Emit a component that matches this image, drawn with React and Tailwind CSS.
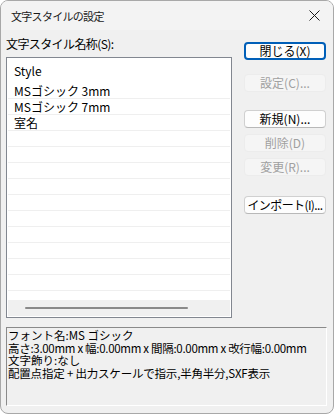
import React from "react";

const FONT = { fontFamily: '"Noto Sans CJK JP", "Noto Sans", sans-serif' };

function DlgButton({ label, primary = false, disabled = false, className = "" }) {
  let look = "bg-[#fdfdfd] border border-[#d0d0d0] border-b-[#b8b8b8] text-black";
  if (primary) look = "bg-[#fdfdfd] border-2 border-[#005fb8] text-black";
  if (disabled) look = "bg-[#f5f5f5] border border-[#ececec] text-[#a0a0a0]";
  return (
    <div
      className={`h-[18px] w-[82px] rounded-[4px] flex items-center justify-center whitespace-nowrap text-[12px] leading-none ${look} ${className}`}
    >
      {label}
    </div>
  );
}

export default function App() {
  const rows = ["MSゴシック 3mm", "MSゴシック 7mm", "室名", "", "", "", "", "", "", "", "", "", ""];

  return (
    <div className="w-[336px] h-[415px] bg-white" style={FONT}>
      <div className="w-[334px] h-[414px] border border-[#a8a8a8] rounded-[8px] bg-[#f0f0f0] overflow-hidden flex flex-col">
        {/* title bar */}
        <div className="h-[29px] bg-[#f3f3f3] flex items-center justify-between pl-[10px] pr-[9px] shrink-0">
          <span className="text-[11px] tracking-[-0.7px] text-[#1a1a1a] leading-none mt-[1px]">文字スタイルの設定</span>
          <svg width="11" height="11" viewBox="0 0 11 11" className="mr-[4px]">
            <path d="M0.5 0.5 L10.5 10.5 M10.5 0.5 L0.5 10.5" stroke="#1a1a1a" strokeWidth="1" fill="none" />
          </svg>
        </div>

        {/* body */}
        <div className="flex">
          <div className="ml-[5px] w-[226px]">
            <div className="h-[16px] mt-[6px] text-[12px] leading-[16px] tracking-[-0.6px] text-black">文字スタイル名称(S):</div>
            <div className="mt-[5px] h-[261px] border border-[#828790] bg-white p-[1px] flex flex-col">
              <div className="h-[24px] flex items-center pl-[6px] text-[12px] text-black">Style</div>
              {rows.map((r, i) => (
                <div key={i} className="h-[16px] border-b border-[#efefef] flex items-center pl-[6px] text-[12px] leading-none text-black">
                  {r}
                </div>
              ))}
              <div className="flex-1" />
              <div className="h-[16px] bg-[#f0f0f0] flex items-center pl-[17px]">
                <div className="w-[163px] h-[2px] bg-[#8a8a8a] rounded-full" />
              </div>
            </div>
          </div>

          <div className="ml-[12px] mt-[12px] flex flex-col">
            <DlgButton label="閉じる(X)" primary />
            <DlgButton label="設定(C)..." disabled className="mt-[14px]" />
            <DlgButton label="新規(N)..." className="mt-[18px]" />
            <DlgButton label="削除(D)" disabled className="mt-[6px]" />
            <DlgButton label="変更(R)..." disabled className="mt-[6px]" />
            <DlgButton label="インポート(I)..." className="mt-[20px] tracking-[-0.6px]" />
          </div>
        </div>

        {/* info panel */}
        <div className="ml-[5px] mt-[9px] w-[321px] h-[79px] border-t border-l border-[#8a8a8a] border-r-white border-b-white border-r border-b bg-[#f0f0f0] pl-[1px] pt-[1px] text-[11.5px] leading-[12.5px] text-black">
          <div>フォント名:MS ゴシック</div>
          <div className="tracking-[-0.3px] whitespace-nowrap">高さ:3.00mm x 幅:0.00mm x 間隔:0.00mm x 改行幅:0.00mm</div>
          <div>文字飾り:なし</div>
          <div className="tracking-[-0.2px] whitespace-nowrap">配置点指定 + 出力スケールで指示,半角半分,SXF表示</div>
        </div>
      </div>
    </div>
  );
}
